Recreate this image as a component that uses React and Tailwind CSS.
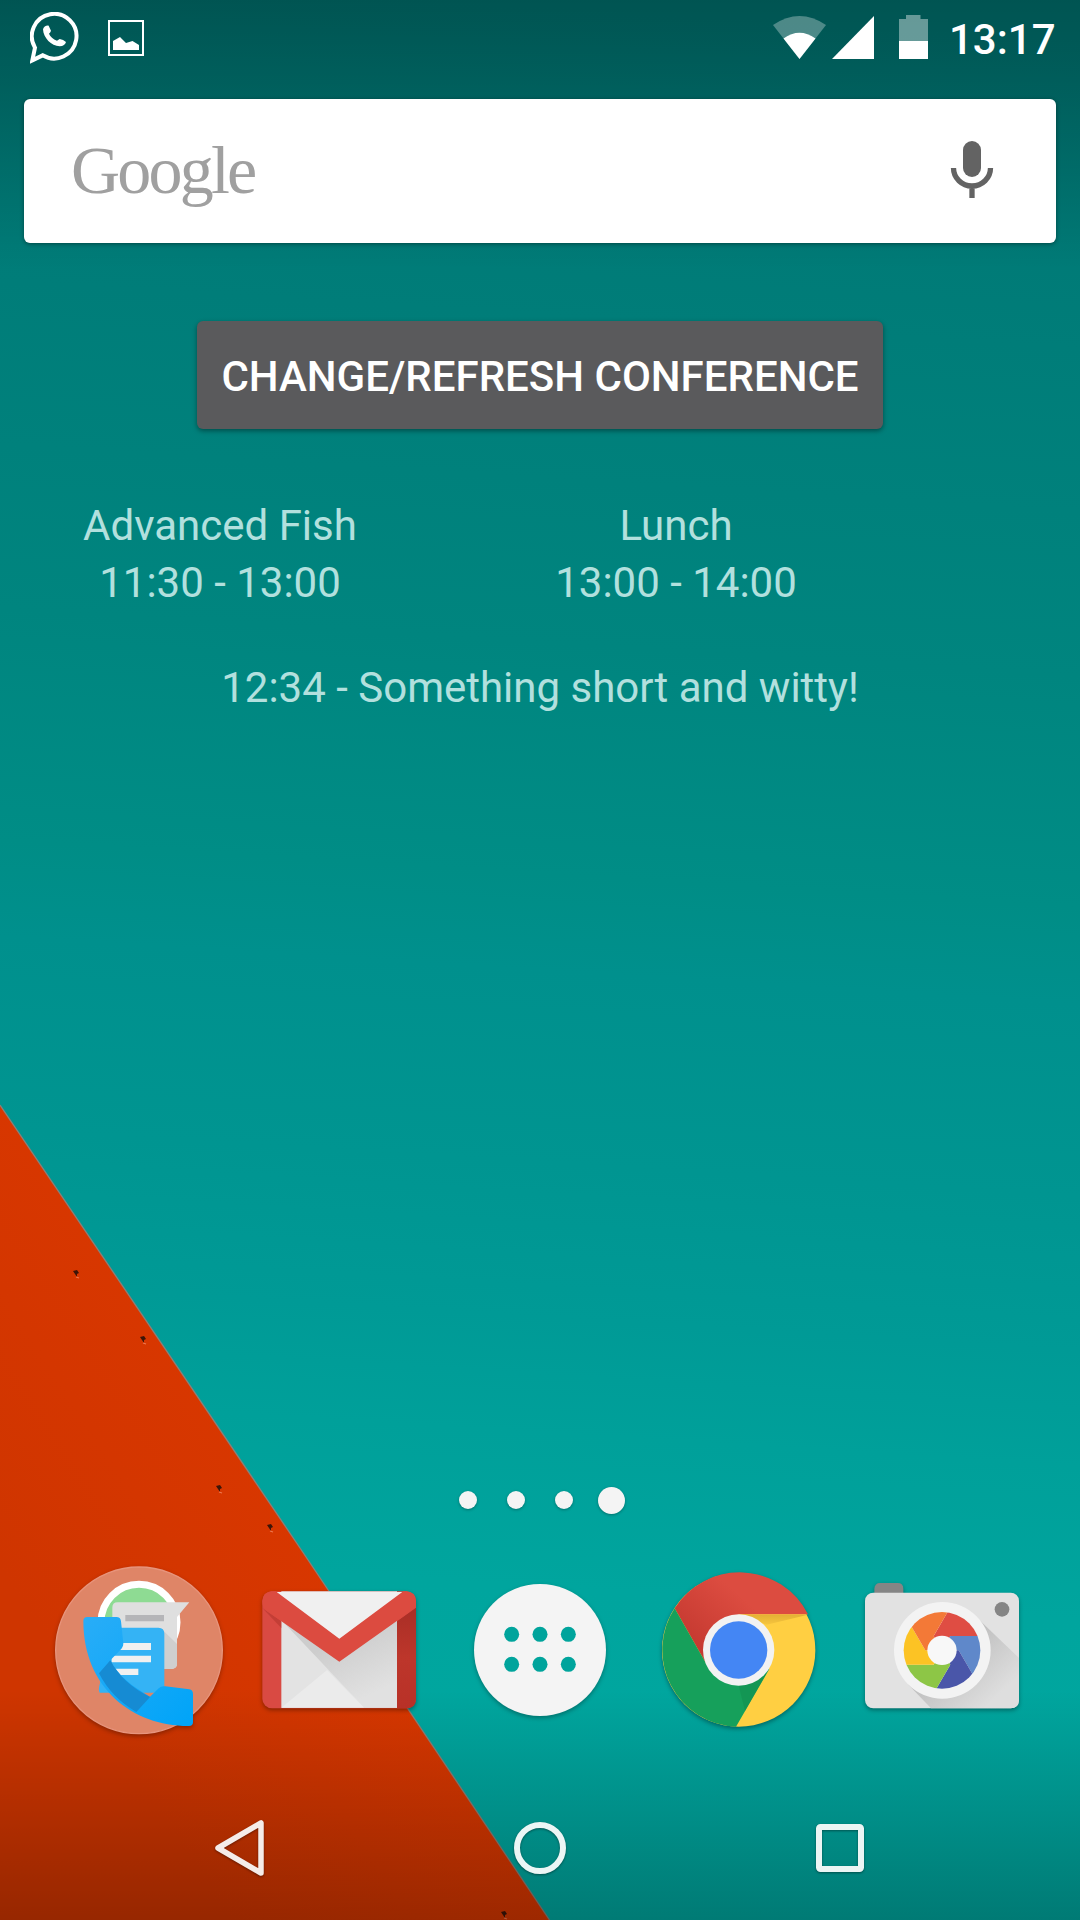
import React from "react";

function Wallpaper() {
  return (
    <svg className="absolute inset-0" width="1080" height="1920" viewBox="0 0 1080 1920" aria-hidden="true">
      <defs>
        <linearGradient id="sea" gradientUnits="userSpaceOnUse" x1="120" y1="-20" x2="0" y2="1900">
          <stop offset="0" stopColor="#007572" />
          <stop offset="0.16" stopColor="#007d79" />
          <stop offset="0.33" stopColor="#00857f" />
          <stop offset="0.45" stopColor="#008d86" />
          <stop offset="0.5" stopColor="#00908d" />
          <stop offset="0.6" stopColor="#009591" />
          <stop offset="0.68" stopColor="#009a96" />
          <stop offset="0.74" stopColor="#00a09a" />
          <stop offset="0.82" stopColor="#00a59e" />
          <stop offset="1" stopColor="#00a8a0" />
        </linearGradient>
        <linearGradient id="rust" gradientUnits="userSpaceOnUse" x1="260" y1="1400" x2="0" y2="1570">
          <stop offset="0" stopColor="#d93700" />
          <stop offset="1" stopColor="#cf3500" />
        </linearGradient>
        <linearGradient id="topShade" x1="0" y1="0" x2="0" y2="1">
          <stop offset="0" stopColor="#000" stopOpacity="0.28" />
          <stop offset="0.3" stopColor="#000" stopOpacity="0.21" />
          <stop offset="1" stopColor="#000" stopOpacity="0" />
        </linearGradient>
        <linearGradient id="bottomShade" x1="0" y1="0" x2="0" y2="1">
          <stop offset="0" stopColor="#000" stopOpacity="0" />
          <stop offset="1" stopColor="#000" stopOpacity="0.27" />
        </linearGradient>
      </defs>
      <rect width="1080" height="1920" fill="url(#sea)" />
      <path d="M0 1105 L300 1548 L549.500 1920 H0Z" fill="url(#rust)" />
      <path d="M0 1105 L300 1548 L549.500 1920" fill="none" stroke="#8c7f78" strokeWidth="1.3" />
      {[[75, 1273], [142, 1339], [218, 1488], [269, 1527], [503, 1914]].map(([x, y]) => (
        <g key={x}>
          <path d={`M${x - 2} ${y - 2} l4 -1 l2 3 l-2 1 l0 3 l-2 -3z`} fill="#3d1508" />
          <path d={`M${x + 1} ${y + 4} l3 1`} stroke="#ef7950" strokeWidth="1.2" />
        </g>
      ))}
      <rect width="1080" height="270" fill="url(#topShade)" />
      <rect y="1690" width="1080" height="230" fill="url(#bottomShade)" />
    </svg>
  );
}

function StatusBar() {
  return (
    <header className="flex h-[72px] items-start text-white">
      <svg className="ml-[30px] mt-3" width="49" height="52" viewBox="90 36 147 156">
        <path d="M101 182 L109 144 A67 67 0 1 1 132 167 Z" fill="none" stroke="#fff" strokeWidth="12" strokeLinejoin="miter" transform="translate(-4 -1)" />
        <path d="M129 88 C131 80 138 76 146 77 L153 92 Q152 97 147 101 Q153 115 171 122 L179 117 Q190 118 198 126 Q195 138 179 139 C154 138 130 114 129 88Z" fill="#fff" />
      </svg>
      <svg className="ml-[29px] mt-5" width="36" height="36" viewBox="0 0 36 36">
        <rect x="1" y="1" width="34" height="34" fill="none" stroke="#fff" strokeWidth="2" />
        <path d="M5 30 V21 L12 17 L18 23 L24.500 21 L31 25 V30Z" fill="#fff" />
      </svg>
      <svg className="ml-[629px] mt-4" width="53" height="43" viewBox="0 0 53 43">
        <path d="M0 9 Q26.500 -9 53 9 L26.500 43Z" fill="#fff" fillOpacity="0.3" />
        <path d="M10.500 22.500 Q26.500 11 42.500 22.500 L26.500 43Z" fill="#fff" />
      </svg>
      <svg className="ml-[6px] mt-4" width="42" height="43" viewBox="0 0 42 43">
        <path d="M42 0 V43 H0Z" fill="#fff" />
      </svg>
      <svg className="ml-[25px] mt-[15px]" width="29" height="44" viewBox="0 0 29 44">
        <path d="M0 26 V4 H7 V0 H21.500 V4 H29 V26Z" fill="#fff" fillOpacity="0.4" />
        <path d="M0 26 H29 V44 H0Z" fill="#fff" />
      </svg>
      <span className="ml-[21px] mt-[15px] text-[42px] font-medium leading-[50px]">13:17</span>
    </header>
  );
}

function SearchBar() {
  return (
    <div className="mx-6 mt-[27px] flex h-36 items-center justify-between rounded-[6px] bg-white pl-[47px] pr-[62px] shadow-[0_1px_4px_rgba(0,0,0,0.4)]">
      <span className="pb-[3px] font-['Liberation_Serif',serif] text-[68px] leading-none tracking-[-2.800px] text-[#a0a0a0]">Google</span>
      <svg className="mb-[2px]" width="44" height="60" viewBox="0 0 44 60">
        <rect x="13" y="1" width="18" height="36" rx="9" fill="#636363" />
        <path d="M3.500 28 A18.500 18 0 0 0 40.500 28 M22 45 V58" fill="none" stroke="#636363" strokeWidth="5.300" />
      </svg>
    </div>
  );
}

function ConferenceWidget() {
  return (
    <section className="flex flex-col items-center text-[42px] leading-[57px] text-[#b2e0de]">
      <button className="mt-[78px] h-[108px] w-[686px] whitespace-nowrap rounded-[6px] bg-[#5a5a5c] pt-[2px] font-medium text-white shadow-[0_2px_5px_rgba(0,0,0,0.4)]">
        CHANGE/REFRESH CONFERENCE
      </button>
      <div className="mt-[68px] grid w-full grid-cols-[440px_472px] text-center">
        <div>
          <p>Advanced Fish</p>
          <p>11:30 - 13:00</p>
        </div>
        <div>
          <p>Lunch</p>
          <p>13:00 - 14:00</p>
        </div>
      </div>
      <p className="mt-12">12:34 - Something short and witty!</p>
    </section>
  );
}

function FolderIcon() {
  return (
    <svg className="drop-shadow-[0_2px_2px_rgba(0,0,0,0.3)]" width="200" height="200" viewBox="0 0 600 600">
      <defs>
        <linearGradient id="handset" x1="0" y1="0" x2="1" y2="1">
          <stop offset="0" stopColor="#29adf7" />
          <stop offset="1" stopColor="#00a4f8" />
        </linearGradient>
      </defs>
      <circle cx="297" cy="301" r="250" fill="#df8567" stroke="#e7947c" strokeWidth="4" />
      <circle cx="297" cy="217" r="114" fill="#8edb93" stroke="#fff" strokeWidth="21" />
      <path d="M233 157 H448 L411 201 V340 Q411 357 394 357 H233 Q217 357 217 340 V173 Q217 157 233 157Z" fill="#dfdfdf" />
      <path d="M362 234 L411 282 V340 Q411 357 394 357 H362Z" fill="#cfcfcf" />
      <path d="M256 195 H372 V214 H256Z" fill="#b5b5b8" />
      <path d="M195 233 H355 Q373 233 373 251 V411 Q373 428 355 428 H179 Q174 420 180 400Z" fill="#34b3f5" />
      <path d="M215 279 H333 V300 H215Z M215 317 H333 V337 H215Z M220 356 H295 V375 H220Z" fill="#f0f0f0" />
      <path d="M142 201 H229 Q242 201 243 214 L250 280 Q250 292 240 301 L211 331 C233 376 277 410 330 440 L356 415 Q364 407 376 409 L448 418 Q459 420 459 432 V517 Q459 528 447 528 C280 529 130 415 130 213 Q130 201 142 201Z" fill="url(#handset)" />
      <path d="M211 331 C233 376 277 415 330 441 L289 486 Q214 443 177 370Z" fill="#168bd3" />
    </svg>
  );
}

function GmailIcon() {
  return (
    <svg className="drop-shadow-[0_2px_2px_rgba(0,0,0,0.35)]" width="200" height="200" viewBox="-30 -30 600 600">
      <defs>
        <linearGradient id="flapShade" gradientUnits="userSpaceOnUse" x1="250" y1="250" x2="330" y2="420">
          <stop offset="0" stopColor="#cdcdcd" />
          <stop offset="1" stopColor="#e1e1e1" />
        </linearGradient>
        <linearGradient id="rightBar" x1="0" y1="0" x2="0" y2="1">
          <stop offset="0" stopColor="#a92e26" />
          <stop offset="0.5" stopColor="#bd362b" />
          <stop offset="1" stopColor="#b83127" />
        </linearGradient>
      </defs>
      <rect x="37" y="94" width="461" height="351" rx="29" fill="#d94a43" />
      <path d="M94 94 H441 V443 H94Z" fill="#e3e3e3" />
      <path d="M94 180 L343 443 H441 V180 L268 302Z" fill="url(#flapShade)" />
      <path d="M94 443 L231 330 L343 443Z" fill="#ebebeb" />
      <path d="M75 96 H462 L268 238Z" fill="#f0f0f0" />
      <path d="M441 184 L498 143 V418 Q498 445 469 445 H441Z" fill="url(#rightBar)" />
      <path d="M37 144 L94 184 V204Z" fill="#b93931" opacity="0.7" />
      <path d="M65 94 H77 L268 236 L460 94 H469 Q498 96 498 124 Q498 140 488 149 L268 305 L47 151 Q37 142 37 124 Q38 96 65 94Z" fill="#dc4b40" />
    </svg>
  );
}

function AppsIcon() {
  return (
    <svg className="drop-shadow-[0_2px_2px_rgba(0,0,0,0.3)]" width="200" height="200" viewBox="0 240 600 600">
      <circle cx="300" cy="540" r="198" fill="#f4f4f4" />
      {[215, 300, 385].map((x) =>
        [493, 583].map((y) => <circle key={`${x}-${y}`} cx={x} cy={y} r="22.5" fill="#00a49c" />)
      )}
    </svg>
  );
}

function ChromeIcon() {
  return (
    <svg className="drop-shadow-[0_2px_2px_rgba(0,0,0,0.35)]" width="200" height="200" viewBox="-30 -30 600 600">
      <defs>
        <linearGradient id="redFold" gradientUnits="userSpaceOnUse" x1="120" y1="240" x2="250" y2="90">
          <stop offset="0" stopColor="#c63a31" />
          <stop offset="1" stopColor="#dc4c40" />
        </linearGradient>
        <linearGradient id="yellowFold" x1="0" y1="0" x2="0" y2="1">
          <stop offset="0" stopColor="#e3b035" />
          <stop offset="1" stopColor="#f6c63e" />
        </linearGradient>
      </defs>
      <circle cx="266" cy="270" r="230" fill="#ffcf42" />
      <path d="M266 163 H474 A230 230 0 0 0 74 145 L168 310 L266 270Z" fill="url(#redFold)" />
      <path d="M74 145 A230 230 0 0 0 258 500 L358 327 L266 270 L168 310Z" fill="#16a05b" />
      <path d="M266 164 H474 L350 194Z" fill="url(#yellowFold)" />
      <path d="M266 377 L350 340 L285 453Z" fill="#108b4d" opacity="0.5" />
      <circle cx="266" cy="270" r="107" fill="#f2f2f2" />
      <circle cx="266" cy="270" r="86" fill="#4486f4" />
    </svg>
  );
}

function CameraIcon() {
  return (
    <svg className="drop-shadow-[0_2px_2px_rgba(0,0,0,0.35)]" width="200" height="200" viewBox="-30 -30 600 600">
      <defs>
        <clipPath id="lens"><circle cx="276" cy="271" r="115" /></clipPath>
        <linearGradient id="longShadow" gradientUnits="userSpaceOnUse" x1="300" y1="280" x2="430" y2="420">
          <stop offset="0" stopColor="#bfbfbf" />
          <stop offset="1" stopColor="#dedede" />
        </linearGradient>
      </defs>
      <path d="M73 110 V86 Q74 69 91 69 H143 Q160 69 160 86 V110Z" fill="#858585" />
      <rect x="45" y="98" width="462" height="347" rx="25" fill="#e2e2e2" />
      <path d="M378 170 L507 294 V420 Q507 445 482 445 H243 L174 373Z" fill="url(#longShadow)" />
      <circle cx="277" cy="271" r="145" fill="#f3f3f3" />
      <g clipPath="url(#lens)">
        <path d="M276 271 L251 228 L351 56 H500 V228 H301Z" fill="#df4d43" />
        <path d="M276 271 L301 228 H500 V443 H426 L326 271Z" fill="#5f88ca" />
        <path d="M276 271 L326 271 L426 443 L326 486 H201 L301 314Z" fill="#4a56a9" />
        <path d="M276 271 L301 314 L201 486 H50 V314 H251Z" fill="#8dc646" />
        <path d="M276 271 L251 314 H50 V99 H126 L226 271Z" fill="#fcc324" />
        <path d="M276 271 L226 271 L126 99 L250 40 L351 56 L251 228Z" fill="#f37937" />
      </g>
      <circle cx="276" cy="271" r="44" fill="#f8f8f8" />
      <circle cx="456" cy="148" r="22" fill="#858585" />
    </svg>
  );
}

function PageDots() {
  return (
    <div className="mt-auto ml-[459px] flex h-[28px] items-center gap-[30px]">
      <i className="size-[18px] rounded-full bg-[#f4f4f4] shadow-[0_1px_3px_rgba(0,0,0,0.3)]" />
      <i className="size-[18px] rounded-full bg-[#f4f4f4] shadow-[0_1px_3px_rgba(0,0,0,0.3)]" />
      <i className="size-[18px] rounded-full bg-[#f4f4f4] shadow-[0_1px_3px_rgba(0,0,0,0.3)]" />
      <i className="-ml-[5px] size-[27px] rounded-full bg-[#f4f4f4] shadow-[0_1px_3px_rgba(0,0,0,0.3)]" />
    </div>
  );
}

function NavBar() {
  return (
    <nav className="mt-[58px] mb-[32px] flex h-20 items-center justify-between px-[200px]">
      <svg className="drop-shadow-[0_1px_1px_rgba(0,0,0,0.4)]" width="80" height="80" viewBox="0 0 80 80">
        <path d="M61 15 V65 L18 40Z" fill="none" stroke="#f5ece9" strokeWidth="5.500" strokeLinejoin="round" />
      </svg>
      <svg className="drop-shadow-[0_1px_1px_rgba(0,0,0,0.4)]" width="80" height="80" viewBox="0 0 80 80">
        <circle cx="40" cy="40" r="23" fill="none" stroke="#ebf6f5" strokeWidth="6" />
      </svg>
      <svg className="drop-shadow-[0_1px_1px_rgba(0,0,0,0.4)]" width="80" height="80" viewBox="0 0 80 80">
        <rect x="19" y="19" width="42" height="42" rx="1.500" fill="none" stroke="#ebf5f4" strokeWidth="6" strokeLinejoin="round" />
      </svg>
    </nav>
  );
}

export default function App() {
  return (
    <main className="relative h-[1920px] w-[1080px] overflow-hidden font-[Roboto,sans-serif]">
      <Wallpaper />
      <div className="relative flex h-full flex-col">
        <StatusBar />
        <SearchBar />
        <ConferenceWidget />
        <PageDots />
        <div className="mx-10 mt-9 grid h-[200px] grid-cols-5">
          <FolderIcon />
          <GmailIcon />
          <AppsIcon />
          <ChromeIcon />
          <CameraIcon />
        </div>
        <NavBar />
      </div>
    </main>
  );
}
